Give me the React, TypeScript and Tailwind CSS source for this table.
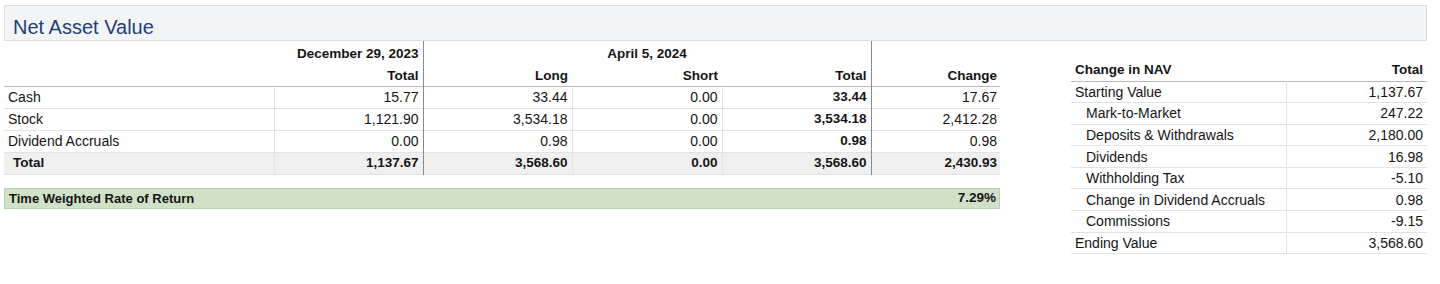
import React from "react";

const font = { fontFamily: '"Liberation Sans", Arial, Helvetica, sans-serif' };

type Row = { label: string; dec: string; long: string; short: string; total: string; change: string };

const rows: Row[] = [
  { label: "Cash", dec: "15.77", long: "33.44", short: "0.00", total: "33.44", change: "17.67" },
  { label: "Stock", dec: "1,121.90", long: "3,534.18", short: "0.00", total: "3,534.18", change: "2,412.28" },
  { label: "Dividend Accruals", dec: "0.00", long: "0.98", short: "0.00", total: "0.98", change: "0.98" },
];

const navRows: { label: string; value: string; indent: boolean }[] = [
  { label: "Starting Value", value: "1,137.67", indent: false },
  { label: "Mark-to-Market", value: "247.22", indent: true },
  { label: "Deposits & Withdrawals", value: "2,180.00", indent: true },
  { label: "Dividends", value: "16.98", indent: true },
  { label: "Withholding Tax", value: "-5.10", indent: true },
  { label: "Change in Dividend Accruals", value: "0.98", indent: true },
  { label: "Commissions", value: "-9.15", indent: true },
  { label: "Ending Value", value: "3,568.60", indent: false },
];

export default function App() {
  return (
    <div className="w-[1440px] h-[284px] bg-white text-[#151515] text-[14px] leading-none" style={font}>
      <div className="pt-[5px] pl-[4px] pr-[13px]">
        <div className="h-[36px] bg-[#f3f4f6] border border-[#dcdcdc] flex items-center pl-[8px] pt-[7px]">
          <span className="text-[20px] text-[#213f75]">Net Asset Value</span>
        </div>
      </div>

      <div className="flex pl-[4px]">
        {/* Left */}
        <div className="w-[996px] flex flex-col">
          <table className="border-collapse table-fixed w-[996px]">
            <colgroup>
              <col className="w-[270px]" />
              <col className="w-[149px]" />
              <col className="w-[149px]" />
              <col className="w-[150px]" />
              <col className="w-[149px]" />
              <col className="w-[129px]" />
            </colgroup>
            <thead className="text-[13.5px]">
              <tr className="h-[22px] font-bold">
                <th className="p-0"></th>
                <th className="p-0 pr-[4px] text-right border-r border-[#8a8a8a] align-bottom pb-[3px]">December 29, 2023</th>
                <th colSpan={3} className="p-0 text-center border-r border-[#8a8a8a] align-bottom pb-[3px]">April 5, 2024</th>
                <th className="p-0"></th>
              </tr>
              <tr className="h-[23px] font-bold border-b border-[#b8b8b8]">
                <th className="p-0"></th>
                <th className="p-0 pr-[4px] text-right border-r border-[#8a8a8a] pt-[2px]">Total</th>
                <th className="p-0 pr-[4px] text-right pt-[2px]">Long</th>
                <th className="p-0 pr-[4px] text-right pt-[2px]">Short</th>
                <th className="p-0 pr-[4px] text-right border-r border-[#8a8a8a] pt-[2px]">Total</th>
                <th className="p-0 pr-[3px] text-right pt-[2px]">Change</th>
              </tr>
            </thead>
            <tbody>
              {rows.map((r) => (
                <tr key={r.label} className="h-[22px] border-b border-[#e2e2e2]">
                  <td className="p-0 pl-[4px] border-r border-[#e2e2e2]">{r.label}</td>
                  <td className="p-0 pr-[4px] text-right border-r border-[#8a8a8a]">{r.dec}</td>
                  <td className="p-0 pr-[4px] text-right border-r border-[#e2e2e2]">{r.long}</td>
                  <td className="p-0 pr-[4px] text-right border-r border-[#e2e2e2]">{r.short}</td>
                  <td className="p-0 pr-[4px] text-right font-bold text-[13.5px] border-r border-[#8a8a8a]">{r.total}</td>
                  <td className="p-0 pr-[3px] text-right">{r.change}</td>
                </tr>
              ))}
              <tr className="h-[22px] bg-[#efefef] font-bold text-[13.5px] border-b border-[#e2e2e2]">
                <td className="p-0 pl-[9px] border-r border-[#e2e2e2]">Total</td>
                <td className="p-0 pr-[4px] text-right border-r border-[#8a8a8a]">1,137.67</td>
                <td className="p-0 pr-[4px] text-right border-r border-[#e2e2e2]">3,568.60</td>
                <td className="p-0 pr-[4px] text-right border-r border-[#e2e2e2]">0.00</td>
                <td className="p-0 pr-[4px] text-right border-r border-[#8a8a8a]">3,568.60</td>
                <td className="p-0 pr-[3px] text-right">2,430.93</td>
              </tr>
            </tbody>
          </table>

          <div className="mt-[13px] h-[21px] bg-[#cfe2c7] border border-[#b9d3ae] flex items-center justify-between pl-[4px] pr-[3px] font-bold text-[13px]">
            <span>Time Weighted Rate of Return</span>
            <span className="text-[13.5px]">7.29%</span>
          </div>
        </div>

        {/* Right */}
        <div className="ml-[71px] pt-[18px]">
          <table className="border-collapse table-fixed w-[356px]">
            <colgroup>
              <col className="w-[215px]" />
              <col className="w-[141px]" />
            </colgroup>
            <thead className="text-[13.5px]">
              <tr className="h-[22px] font-bold border-b border-[#b8b8b8]">
                <th className="p-0 pl-[4px] text-left">Change in NAV</th>
                <th className="p-0 pr-[4px] text-right">Total</th>
              </tr>
            </thead>
            <tbody>
              {navRows.map((r) => (
                <tr key={r.label} className="h-[21.6px] border-b border-[#e2e2e2]">
                  <td className={`p-0 border-r border-[#e2e2e2] ${r.indent ? "pl-[15px]" : "pl-[4px]"}`}>{r.label}</td>
                  <td className="p-0 pr-[4px] text-right">{r.value}</td>
                </tr>
              ))}
            </tbody>
          </table>
        </div>
      </div>
    </div>
  );
}
